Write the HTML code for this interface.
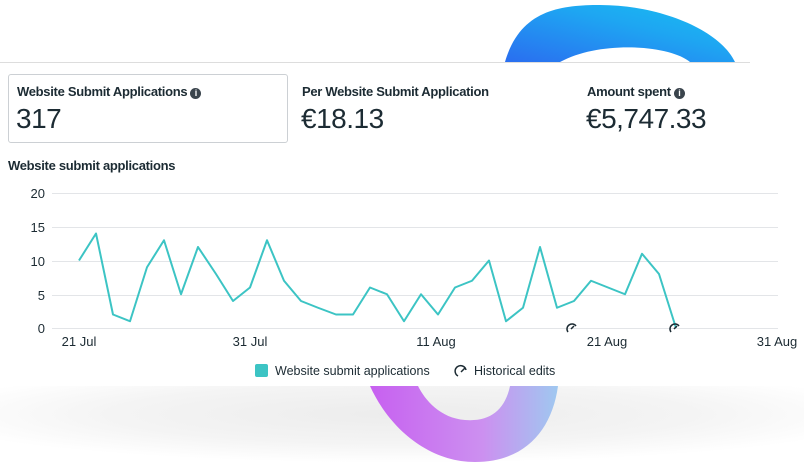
<!DOCTYPE html><html><head><style>
body{margin:0;width:804px;height:467px;overflow:hidden;background:#fff;font-family:"Liberation Sans",sans-serif;position:relative;color:#1c2b33}
.t{position:absolute;font-size:13px;font-weight:bold;letter-spacing:-0.3px}
.v{position:absolute;font-size:28px;letter-spacing:-0.5px}
.i{display:inline-block;width:11px;height:11px;border-radius:50%;background:#3a444c;color:#fff;font-size:9px;text-align:center;line-height:11px;vertical-align:0px;margin-left:3px}
</style></head><body>
<svg width="804" height="467" style="position:absolute;left:0;top:0">
<defs>
<radialGradient id="bg" cx="0.5" cy="0.35" r="0.6"><stop offset="0" stop-color="#ececec"/><stop offset="0.6" stop-color="#f4f4f4"/><stop offset="1" stop-color="#fff"/></radialGradient>
<linearGradient id="bl" x1="0" y1="1" x2="1" y2="0"><stop offset="0" stop-color="#2a6ef0"/><stop offset="0.6" stop-color="#1ea6f2"/><stop offset="1" stop-color="#18c0f0"/></linearGradient>
<linearGradient id="pu" x1="0" y1="0" x2="1" y2="0"><stop offset="0" stop-color="#c760f0"/><stop offset="0.6" stop-color="#cc90f0"/><stop offset="1" stop-color="#9fc8f0"/></linearGradient>
</defs>
<rect x="0" y="386" width="804" height="81" fill="url(#bg)"/>
<path d="M505 62 C520 10 560 5 600 5 C660 5 720 30 735 62 L690 62 C670 45 600 40 560 62 Z" fill="url(#bl)"/>
<path d="M370 386 C390 430 430 462 475 462 C525 462 552 430 558 386 L510 386 C505 410 490 422 465 420 C440 418 425 400 418 386 Z" fill="url(#pu)"/>
<line x1="0" y1="62.5" x2="750" y2="62.5" stroke="#ddd"/>
<g stroke="#e3e5e8" stroke-width="1">
<line x1="52" y1="193.5" x2="778" y2="193.5"/><line x1="52" y1="227.5" x2="778" y2="227.5"/><line x1="52" y1="261.5" x2="778" y2="261.5"/><line x1="52" y1="295.5" x2="778" y2="295.5"/><line x1="52" y1="328.5" x2="778" y2="328.5"/>
</g>
<g font-size="13" fill="#1c2b33" font-family="Liberation Sans">
<text x="45" y="198" text-anchor="end">20</text><text x="45" y="232" text-anchor="end">15</text><text x="45" y="266" text-anchor="end">10</text><text x="45" y="300" text-anchor="end">5</text><text x="45" y="333" text-anchor="end">0</text>
<text x="79" y="346" text-anchor="middle">21 Jul</text><text x="250" y="346" text-anchor="middle">31 Jul</text><text x="436" y="346" text-anchor="middle">11 Aug</text><text x="607" y="346" text-anchor="middle">21 Aug</text><text x="777" y="346" text-anchor="middle">31 Aug</text>
<text x="275" y="375" font-size="12.5">Website submit applications</text><text x="474" y="375" font-size="12.5">Historical edits</text>
</g>
<polyline fill="none" stroke="#3cc4c4" stroke-width="2" stroke-linejoin="round" points="79,260.5 96,233.5 113,314.5 130,321.25 147,267.25 164,240.25 181,294.25 198,247 216,274 233,301 250,287.5 267,240.25 284,280.75 301,301 318,307.75 336,314.5 353,314.5 370,287.5 387,294.25 404,321.25 421,294.25 438,314.5 455,287.5 472,280.75 489,260.5 506,321.25 523,307.75 540,247 557,307.75 574,301 591,280.75 608,287.5 625,294.25 642,253.75 659,274 676,328"/>
<rect x="255" y="364" width="13" height="13" rx="2" fill="#3cc4c4"/>
<g fill="none" stroke="#1c2b33" stroke-width="1.5">
<path d="M458 376 A5.5 5.5 0 1 1 466 370"/><path d="M461 372 L465 368"/>
<path d="M568 332 A4.5 4.5 0 1 1 576 326"/><path d="M571 329 L574 326"/>
<path d="M671 332 A4.5 4.5 0 1 1 679 326"/><path d="M674 329 L677 326"/>
</g>
</svg>
<div style="position:absolute;left:8px;top:74px;width:278px;height:67px;border:1px solid #ccd0d4;border-radius:3px"></div>
<div class="t" style="left:17px;top:84px">Website Submit Applications<span class="i">i</span></div>
<div class="v" style="left:16px;top:103px">317</div>
<div class="t" style="left:302px;top:84px">Per Website Submit Application</div>
<div class="v" style="left:301px;top:103px">€18.13</div>
<div class="t" style="left:587px;top:84px">Amount spent<span class="i">i</span></div>
<div class="v" style="left:586px;top:103px">€5,747.33</div>
<div class="t" style="left:8px;top:158px">Website submit applications</div>
</body></html>
